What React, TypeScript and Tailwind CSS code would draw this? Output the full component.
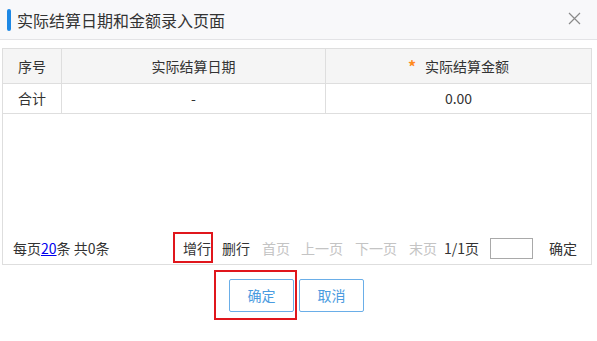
import React from "react";

const font = { fontFamily: '"Noto Sans CJK SC", "Noto Sans", sans-serif' };

export default function App() {
  return (
    <div
      className="w-[597px] h-[341px] bg-white text-[#333] overflow-hidden"
      style={font}
    >
      {/* Header */}
      <div className="h-[40px] bg-[#f8f8fa] border-b border-[#e3e3e6] flex items-center pl-[7px] pr-[16px]">
        <div className="w-[4px] h-[22px] rounded-[2px] bg-[#1e88e5]" />
        <div className="ml-[6px] text-[16px] leading-none text-[#333] flex-1">
          实际结算日期和金额录入页面
        </div>
        <svg width="13" height="13" viewBox="0 0 13 13" className="mt-[-2px]">
          <path d="M1 1 L12 12 M12 1 L1 12" stroke="#8a8a8a" strokeWidth="1.2" fill="none" />
        </svg>
      </div>

      {/* Table */}
      <div className="mt-[8px] ml-[2px] w-[590px] h-[217px] border border-[#dedede] flex flex-col">
        <div className="flex h-[35px] bg-[#f5f5f5] border-b border-[#dedede] text-[14px]">
          <div className="w-[59px] border-r border-[#dedede] flex items-center justify-center">序号</div>
          <div className="w-[264px] border-r border-[#dedede] flex items-center justify-center">实际结算日期</div>
          <div className="flex-1 flex items-center justify-center">
            <span className="text-[#ff8a1f] mr-[9px] text-[16px] font-bold">*</span>
            实际结算金额
          </div>
        </div>
        <div className="flex h-[30px] border-b border-[#dedede] text-[14px]">
          <div className="w-[59px] border-r border-[#dedede] flex items-center justify-center">合计</div>
          <div className="w-[264px] border-r border-[#dedede] flex items-center justify-center">-</div>
          <div className="flex-1 flex items-center justify-center">0.00</div>
        </div>
        <div className="flex-1" />
        <div className="h-[30px] mb-[1px] flex items-center pl-[10px] pr-[14px]">
          <div className="text-[#333] text-[14px]">
            每页<span className="text-[#0000ee] underline">20</span>条 共0条
          </div>
          <div className="flex-1" />
          <div className="flex items-center text-[14px]">
            <span className="relative">
              增行
              <span className="absolute left-[-10px] top-[-6px] w-[40px] h-[31px] border-2 border-[#e0161c]" />
            </span>
            <span className="ml-[11px]">删行</span>
            <span className="ml-[12px] text-[#c4c4c4]">首页</span>
            <span className="ml-[11px] text-[#c4c4c4]">上一页</span>
            <span className="ml-[12px] text-[#c4c4c4]">下一页</span>
            <span className="ml-[12px] text-[#c4c4c4]">末页</span>
            <span className="ml-[7px]">1/1页</span>
            <span className="ml-[11px] w-[43px] h-[21px] border border-[#a9a9a9] bg-white" />
            <span className="ml-[16px]">确定</span>
          </div>
        </div>
      </div>

      {/* Buttons */}
      <div className="flex justify-center gap-[5px] mt-[14px] pr-[4px]">
        <div className="relative">
          <button className="w-[65px] h-[33px] border border-[#6aaee8] rounded-[2px] text-[14px] text-[#4a9be0] bg-white">
            确定
          </button>
          <span className="absolute left-[-15px] top-[-9px] w-[83px] h-[50px] border-2 border-[#e0161c]" />
        </div>
        <button className="w-[65px] h-[33px] border border-[#6aaee8] rounded-[2px] text-[14px] text-[#4a9be0] bg-white">
          取消
        </button>
      </div>
    </div>
  );
}
